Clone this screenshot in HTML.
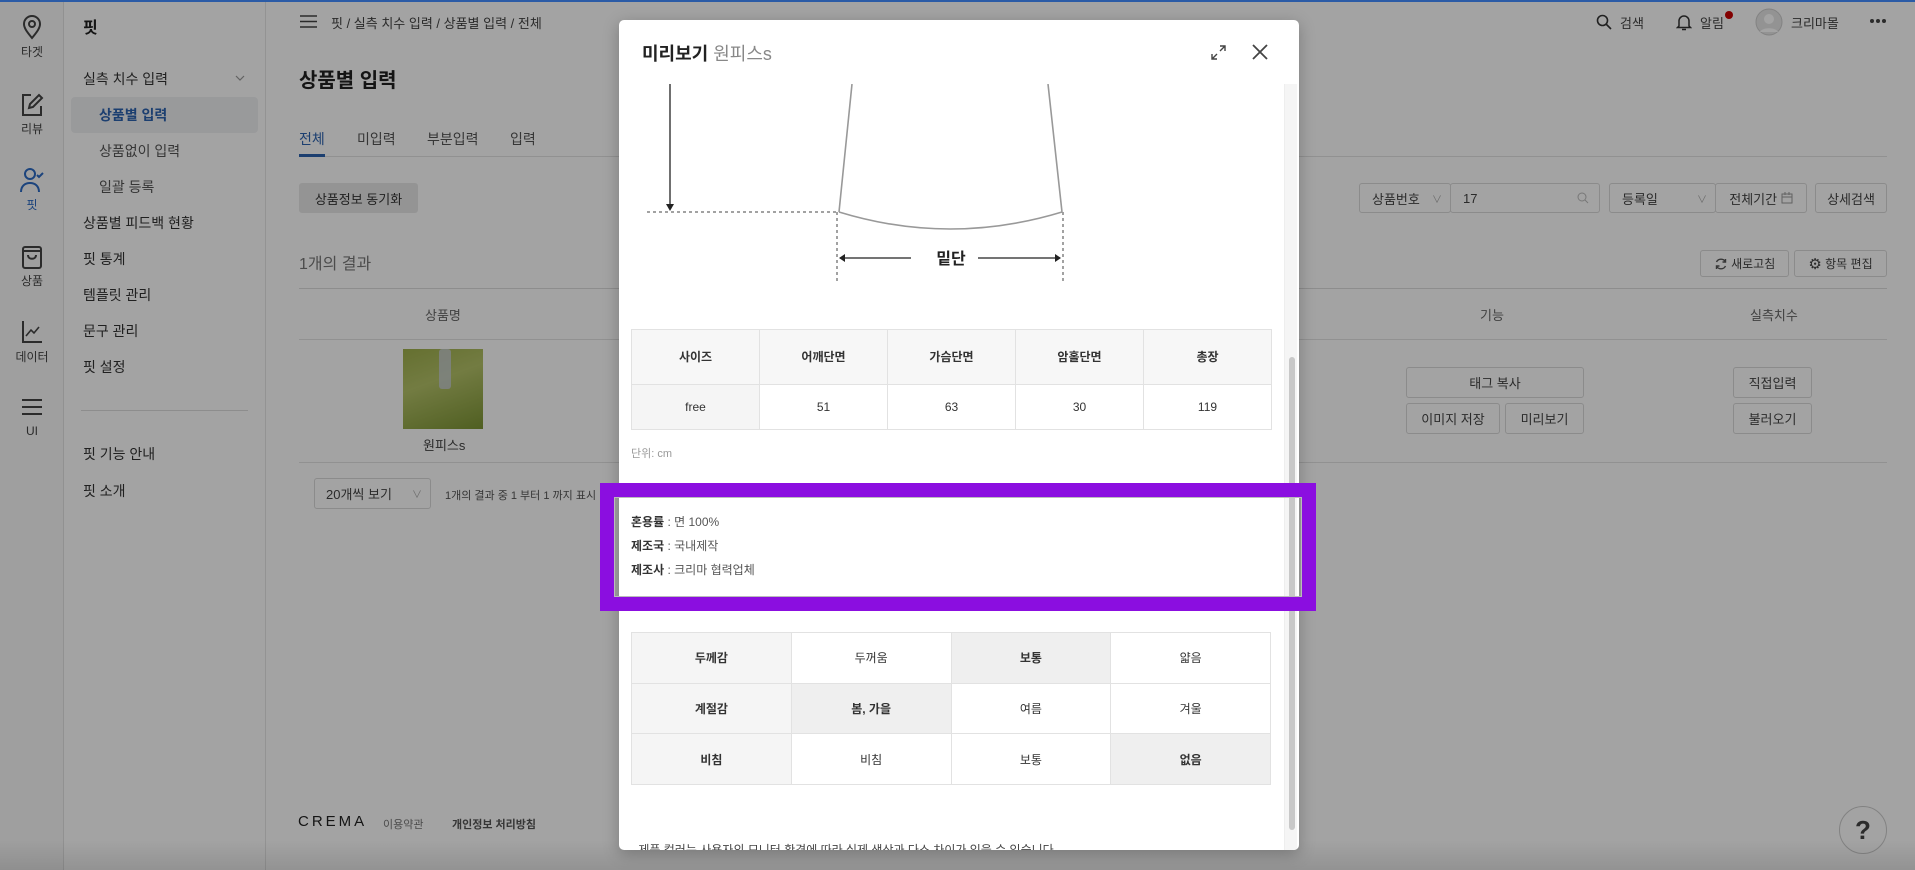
<!DOCTYPE html>
<html><head><meta charset="utf-8">
<style>
*{margin:0;padding:0;box-sizing:border-box}
body{width:1915px;height:870px;overflow:hidden;position:relative;background:#fff;font-family:"Liberation Sans","Noto Sans CJK KR",sans-serif;color:#333;font-size:14px}
.a{position:absolute;white-space:nowrap}
.ib{left:0;top:0;width:64px;height:870px;background:#f9f9f9;border-right:1px solid #e3e3e3}
.ic{position:absolute;left:16px;width:32px;height:28px}
.il{position:absolute;width:64px;text-align:center;font-size:12px;color:#444}
.sb{left:64px;top:0;width:202px;height:870px;background:#fff;border-right:1px solid #e6e6e6}
.btn{position:absolute;border:1px solid #d9d9d9;border-radius:3px;background:#fff;font-size:13px;color:#444;display:flex;align-items:center;justify-content:center}
.ov{position:absolute;left:0;top:0;width:1915px;height:870px;background:rgba(0,0,0,0.36)}
table{border-collapse:collapse;position:absolute;table-layout:fixed}
td{border:1px solid #e2e2e2;text-align:center;font-size:12px;color:#333}
</style></head><body>

<div class="a ib">
<svg class="ic" style="top:13px" viewBox="0 0 32 28"><path d="M16 25c-5-6-8-10-8-14a8 8 0 0 1 16 0c0 4-3 8-8 14z" fill="none" stroke="#444" stroke-width="2"/><circle cx="16" cy="11" r="3" fill="none" stroke="#444" stroke-width="2"/></svg>
<div class="il" style="top:43px">타겟</div>
<svg class="ic" style="top:91px" viewBox="0 0 32 28"><path d="M15 4H7v20h18v-9" fill="none" stroke="#444" stroke-width="2"/><path d="M13 17l1-4 9-9 3 3-9 9z" fill="none" stroke="#444" stroke-width="2"/></svg>
<div class="il" style="top:120px">리뷰</div>
<svg class="ic" style="top:166px" viewBox="0 0 32 28"><circle cx="14" cy="8" r="5" fill="none" stroke="#2d6bc4" stroke-width="2"/><path d="M5 26c0-6 4-9 9-9s9 3 9 9" fill="none" stroke="#2d6bc4" stroke-width="2"/><path d="M21 9l2 2 4-4" fill="none" stroke="#2d6bc4" stroke-width="2"/></svg>
<div class="il" style="top:196px;color:#2d6bc4">핏</div>
<svg class="ic" style="top:242px" viewBox="0 0 32 28"><rect x="7" y="5" width="18" height="21" rx="2" fill="none" stroke="#444" stroke-width="2"/><path d="M7 9h18M12 13c0 5 8 5 8 0" fill="none" stroke="#444" stroke-width="2"/></svg>
<div class="il" style="top:272px">상품</div>
<svg class="ic" style="top:317px" viewBox="0 0 32 28"><path d="M7 4v21h19" fill="none" stroke="#444" stroke-width="2"/><path d="M10 19l5-6 3 3 5-6" fill="none" stroke="#444" stroke-width="1.6"/></svg>
<div class="il" style="top:348px">데이터</div>
<svg class="ic" style="top:393px" viewBox="0 0 32 28"><path d="M6 7h20M6 14h20M6 21h20" stroke="#444" stroke-width="2"/></svg>
<div class="il" style="top:424px">UI</div>
</div>

<div class="a sb"></div>
<div class="a" style="left:83px;top:14px;font-size:16px;font-weight:bold;color:#222">핏</div>
<div class="a" style="left:83px;top:69px;font-size:14px">실측 치수 입력</div>
<svg class="a" style="left:234px;top:73px" width="12" height="10" viewBox="0 0 12 10"><path d="M2 3l4 4 4-4" fill="none" stroke="#999" stroke-width="1.2"/></svg>
<div class="a" style="left:71px;top:97px;width:187px;height:36px;background:#f0f1f3;border-radius:4px"></div>
<div class="a" style="left:99px;top:105px;font-size:14px;color:#2d63b0;font-weight:bold">상품별 입력</div>
<div class="a" style="left:99px;top:141px;font-size:14px;color:#555">상품없이 입력</div>
<div class="a" style="left:99px;top:177px;font-size:14px;color:#555">일괄 등록</div>
<div class="a" style="left:83px;top:213px;font-size:14px">상품별 피드백 현황</div>
<div class="a" style="left:83px;top:249px;font-size:14px">핏 통계</div>
<div class="a" style="left:83px;top:285px;font-size:14px">템플릿 관리</div>
<div class="a" style="left:83px;top:321px;font-size:14px">문구 관리</div>
<div class="a" style="left:83px;top:357px;font-size:14px">핏 설정</div>
<div class="a" style="left:81px;top:410px;width:167px;height:1px;background:#ddd"></div>
<div class="a" style="left:83px;top:444px;font-size:14px">핏 기능 안내</div>
<div class="a" style="left:83px;top:481px;font-size:14px">핏 소개</div>

<svg class="a" style="left:300px;top:14px" width="17" height="15" viewBox="0 0 17 15"><path d="M0 2h17M0 7.5h17M0 13h17" stroke="#444" stroke-width="1.6"/></svg>
<div class="a" style="left:331px;top:13px;font-size:13px;color:#444">핏 / 실측 치수 입력 / 상품별 입력 / 전체</div>
<svg class="a" style="left:1596px;top:14px" width="16" height="16" viewBox="0 0 16 16"><circle cx="6.5" cy="6.5" r="5" fill="none" stroke="#333" stroke-width="1.6"/><path d="M10 10l5 5" stroke="#333" stroke-width="1.6"/></svg>
<div class="a" style="left:1620px;top:13px;font-size:13px;color:#444">검색</div>
<svg class="a" style="left:1676px;top:13px" width="16" height="18" viewBox="0 0 16 18"><path d="M3 13V8a5 5 0 0 1 10 0v5l1.5 1.5h-13z" fill="none" stroke="#333" stroke-width="1.5"/><path d="M6 16.5h4" stroke="#333" stroke-width="1.5"/></svg>
<div class="a" style="left:1700px;top:13px;font-size:13px;color:#444">알림</div>
<div class="a" style="left:1725px;top:11px;width:8px;height:8px;border-radius:50%;background:#c00"></div>
<svg class="a" style="left:1755px;top:8px" width="28" height="28" viewBox="0 0 28 28"><circle cx="14" cy="14" r="13" fill="#e6e6e6" stroke="#ccc"/><circle cx="14" cy="11" r="5" fill="#fff"/><path d="M5 24c2-5 16-5 18 0" fill="#fff"/></svg>
<div class="a" style="left:1791px;top:13px;font-size:13px;color:#444">크리마몰</div>
<svg class="a" style="left:1869px;top:18px" width="18" height="6" viewBox="0 0 18 6"><circle cx="3" cy="3" r="2" fill="#444"/><circle cx="9" cy="3" r="2" fill="#444"/><circle cx="15" cy="3" r="2" fill="#444"/></svg>

<div class="a" style="left:299px;top:64px;font-size:20px;font-weight:bold;color:#222">상품별 입력</div>
<div class="a" style="left:299px;top:156px;width:1588px;height:1px;background:#e3e3e3"></div>
<div class="a" style="left:299px;top:129px;font-size:14px;color:#2d63b0">전체</div>
<div class="a" style="left:299px;top:154px;width:26px;height:3px;background:#2d63b0"></div>
<div class="a" style="left:357px;top:129px;font-size:14px;color:#555">미입력</div>
<div class="a" style="left:427px;top:129px;font-size:14px;color:#555">부분입력</div>
<div class="a" style="left:510px;top:129px;font-size:14px;color:#555">입력</div>
<div class="btn" style="left:299px;top:183px;width:119px;height:30px;background:#e8e8e8;border-color:#e8e8e8;color:#333">상품정보 동기화</div>
<div class="a" style="left:299px;top:250px;font-size:16px;color:#777">1개의 결과</div>
<div class="a" style="left:299px;top:288px;width:1588px;height:1px;background:#ddd"></div>
<div class="a" style="left:299px;top:339px;width:1588px;height:1px;background:#e3e3e3"></div>
<div class="a" style="left:299px;top:462px;width:1588px;height:1px;background:#e3e3e3"></div>
<div class="a" style="left:425px;top:305px;font-size:13px;color:#666">상품명</div>
<div class="a" style="left:1480px;top:305px;font-size:13px;color:#666">기능</div>
<div class="a" style="left:1750px;top:305px;font-size:13px;color:#666">실측치수</div>
<div class="a" style="left:403px;top:349px;width:80px;height:80px;background:linear-gradient(160deg,#9fb04c 0%,#b4c268 40%,#7d9535 100%)"><div style="position:absolute;left:36px;top:0;width:12px;height:40px;background:#c8cdd4;border-radius:3px;opacity:.8"></div></div>
<div class="a" style="left:423px;top:435px;font-size:13px;color:#444">원피스s</div>
<div class="btn" style="left:1406px;top:367px;width:178px;height:31px">태그 복사</div>
<div class="btn" style="left:1406px;top:403px;width:94px;height:31px">이미지 저장</div>
<div class="btn" style="left:1505px;top:403px;width:79px;height:31px">미리보기</div>
<div class="btn" style="left:1733px;top:367px;width:79px;height:31px">직접입력</div>
<div class="btn" style="left:1733px;top:403px;width:79px;height:31px">불러오기</div>
<div class="btn" style="left:1359px;top:183px;width:92px;height:30px;justify-content:flex-start;padding-left:12px;font-size:13px">상품번호<span style="position:absolute;right:8px;color:#aaa;font-size:10px">∨</span></div>
<div class="btn" style="left:1450px;top:183px;width:150px;height:30px;justify-content:flex-start;padding-left:12px;font-size:13px">17<svg style="position:absolute;right:10px" width="12" height="12" viewBox="0 0 12 12"><circle cx="5" cy="5" r="4" fill="none" stroke="#bbb"/><path d="M8 8l3 3" stroke="#bbb"/></svg></div>
<div class="btn" style="left:1609px;top:183px;width:107px;height:30px;justify-content:flex-start;padding-left:12px;font-size:13px">등록일<span style="position:absolute;right:8px;color:#aaa;font-size:10px">∨</span></div>
<div class="btn" style="left:1715px;top:183px;width:92px;height:30px;font-size:13px">전체기간&nbsp;<svg width="12" height="12" viewBox="0 0 12 12"><rect x="1" y="2" width="10" height="9" fill="none" stroke="#999"/><path d="M1 5h10M4 0v3M8 0v3" stroke="#999"/></svg></div>
<div class="btn" style="left:1815px;top:183px;width:72px;height:30px;font-size:13px">상세검색</div>
<div class="btn" style="left:1700px;top:250px;width:89px;height:27px;font-size:12px"><svg width="14" height="14" viewBox="0 0 14 14"><path d="M11.5 5A5 5 0 0 0 2.5 5M2.5 9a5 5 0 0 0 9 0" fill="none" stroke="#555" stroke-width="1.4"/><path d="M11.5 2v3h-3M2.5 12V9h3" fill="none" stroke="#555" stroke-width="1.4"/></svg>&nbsp;새로고침</div>
<div class="btn" style="left:1794px;top:250px;width:93px;height:27px;font-size:12px"><span style="font-size:15px">⚙</span>&nbsp;항목 편집</div>
<div class="btn" style="left:314px;top:478px;width:117px;height:31px;justify-content:flex-start;padding-left:11px;font-size:13px">20개씩 보기<span style="position:absolute;right:8px;color:#aaa;font-size:10px">∨</span></div>
<div class="a" style="left:445px;top:487px;font-size:11px;color:#555">1개의 결과 중 1 부터 1 까지 표시</div>
<div class="a" style="left:298px;top:813px;font-size:15px;letter-spacing:3px;color:#222">CREMA</div>
<div class="a" style="left:383px;top:816px;font-size:11px;color:#777">이용약관</div>
<div class="a" style="left:452px;top:816px;font-size:11px;color:#555;font-weight:bold">개인정보 처리방침</div>
<div class="a" style="left:1839px;top:806px;width:48px;height:48px;border-radius:50%;border:1px solid #ccc;background:#fff;font-size:26px;font-weight:bold;color:#444;text-align:center;line-height:46px">?</div>

<div class="ov"></div>
<div class="a" style="left:0;top:840px;width:1915px;height:30px;background:linear-gradient(rgba(0,0,0,0),rgba(0,0,0,0.1))"></div>
<div class="a" style="left:0;top:0;width:1915px;height:2px;background:#2b5ba6"></div>

<div class="a" style="left:619px;top:20px;width:680px;height:830px;background:#fff;border-radius:5px;overflow:hidden;box-shadow:0 4px 16px rgba(0,0,0,.25)">
 <div class="a" style="left:23px;top:20px;font-size:18px;font-weight:bold;color:#222">미리보기 <span style="font-weight:normal;color:#888">원피스s</span></div>
 <svg class="a" style="left:591px;top:24px" width="17" height="17" viewBox="0 0 17 17"><path d="M10 2h5v5M15 2l-5 5M7 15H2v-5M2 15l5-5" fill="none" stroke="#444" stroke-width="1.4"/></svg>
 <svg class="a" style="left:632px;top:23px" width="18" height="18" viewBox="0 0 18 18"><path d="M2 2l14 14M16 2L2 16" stroke="#444" stroke-width="1.8"/></svg>
 <div class="a" style="left:665px;top:64px;width:13px;height:766px;background:#f5f5f5;border-left:1px solid #eee"></div>
 <div class="a" style="left:670px;top:337px;width:6px;height:473px;background:#c8c8c8;border-radius:3px"></div>
 <svg class="a" style="left:0;top:64px" width="665" height="230" viewBox="0 84 665 230">
  <path d="M51 84V206" stroke="#222" stroke-width="1.3"/><path d="M47 204l4 7 4-7z" fill="#222"/>
  <path d="M28 212H218" stroke="#444" stroke-dasharray="3 3"/>
  <path d="M233 84L220 212M429 84L443 212" stroke="#999" stroke-width="1.6"/>
  <path d="M220 212Q331 246 443 212" fill="none" stroke="#999" stroke-width="1.6"/>
  <path d="M218 212V282M444 212V282" stroke="#444" stroke-dasharray="3 3"/>
  <path d="M221 258H292M359 258H441" stroke="#222" stroke-width="1.3"/>
  <path d="M226 254l-6 4 6 4zM436 254l6 4-6 4z" fill="#222"/>
  <text x="332" y="264" text-anchor="middle" font-size="16" font-weight="bold" fill="#222" font-family="Liberation Sans,Noto Sans CJK KR,sans-serif">밑단</text>
 </svg>
 <table style="left:12px;top:309px;width:641px;height:101px">
  <tr style="background:#f7f7f7"><td style="font-weight:bold">사이즈</td><td style="font-weight:bold">어깨단면</td><td style="font-weight:bold">가슴단면</td><td style="font-weight:bold">암홀단면</td><td style="font-weight:bold">총장</td></tr>
  <tr><td style="background:#f5f5f5">free</td><td>51</td><td>63</td><td>30</td><td>119</td></tr>
 </table>
 <div class="a" style="left:12px;top:425px;font-size:11px;color:#999">단위: cm</div>
 <div class="a" style="left:12px;top:490px;font-size:12px;color:#555;line-height:24px"><b style="color:#333">혼용률</b> : 면 100%<br><b style="color:#333">제조국</b> : 국내제작<br><b style="color:#333">제조사</b> : 크리마 협력업체</div>
 <table style="left:12px;top:612px;width:640px;height:153px">
  <tr><td style="background:#f5f5f5;font-weight:bold">두께감</td><td>두꺼움</td><td style="background:#efefef;font-weight:bold">보통</td><td>얇음</td></tr>
  <tr><td style="background:#f5f5f5;font-weight:bold">계절감</td><td style="background:#efefef;font-weight:bold">봄, 가을</td><td>여름</td><td>겨울</td></tr>
  <tr><td style="background:#f5f5f5;font-weight:bold">비침</td><td>비침</td><td>보통</td><td style="background:#efefef;font-weight:bold">없음</td></tr>
 </table>
 <div class="a" style="left:12px;top:821px;font-size:12px;color:#444">- 제품 컬러는 사용자의 모니터 환경에 따라 실제 색상과 다소 차이가 있을 수 있습니다.</div>
</div>

<div class="a" style="left:600px;top:483px;width:716px;height:128px;border:14px solid #8b0ee0"></div>
<div class="a" style="left:614px;top:497px;width:688px;height:100px;border:1px solid #bbb"></div>
</body></html>
